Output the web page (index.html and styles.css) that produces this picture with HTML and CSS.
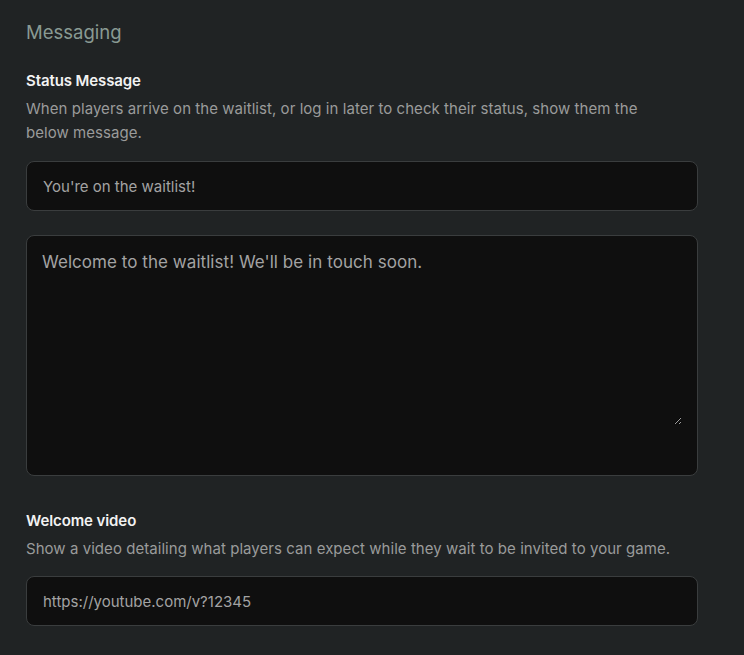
FILE: index.html
```html
<!DOCTYPE html>
<html>
<head>
<meta charset="utf-8">
<link rel="stylesheet" href="styles.css">
</head>
<body>
<main class="panel">
  <h2 class="section-title">Messaging</h2>
  <div class="field">
    <label class="label">Status Message</label>
    <p class="help">When players arrive on the waitlist, or log in later to check their status, show them the below message.</p>
    <input class="input" type="text" value="You're on the waitlist!">
    <div class="textarea-box">
      <textarea class="textarea">Welcome to the waitlist! We'll be in touch soon.</textarea>
    </div>
  </div>
  <div class="field">
    <label class="label">Welcome video</label>
    <p class="help">Show a video detailing what players can expect while they wait to be invited to your game.</p>
    <input class="input" type="text" value="https://youtube.com/v?12345">
  </div>
</main>
</body>
</html>
```
FILE: styles.css
```css
html, body {
  margin: 0;
  padding: 0;
  background: #202324;
}
body {
  font-family: Inter, "Noto Sans", sans-serif;
  color: #e6e6e6;
}
.panel {
  padding: 19px 46px 0 26px;
  display: flex;
  flex-direction: column;
}
.section-title {
  margin: 0;
  font-size: 18.5px;
  font-weight: 400;
  color: #899a93;
  line-height: 26px;
}
.field {
  display: flex;
  flex-direction: column;
}
.field + .field {
  margin-top: 35px;
}
.section-title + .field {
  margin-top: 26px;
}
.label {
  font-size: 15px;
  font-weight: 600;
  color: #f2f2f2;
  line-height: 20px;
  letter-spacing: -0.1px;
}
.help {
  margin: 6px 0 0;
  max-width: 652px;
  font-size: 15px;
  line-height: 24px;
  color: #9a9b9b;
  letter-spacing: 0.05px;
}
.input, .textarea-box {
  box-sizing: border-box;
  width: 100%;
  background: #0f0f0f;
  border: 1px solid #3a3d3e;
  border-radius: 8px;
}
.input {
  height: 50px;
  margin-top: 16px;
  padding: 0 16px;
  font-family: inherit;
  font-size: 15px;
  color: #a3a3a3;
  outline: none;
}
.field:last-child .input {
  margin-top: 15px;
}
.textarea-box {
  height: 241px;
  margin-top: 24px;
  padding: 14px 15px 0 15px;
  display: flex;
  flex-direction: column;
}
.textarea {
  box-sizing: border-box;
  height: 175px;
  width: 100%;
  padding: 0;
  border: none;
  background: transparent;
  color: #a3a3a3;
  font-family: inherit;
  font-size: 17px;
  line-height: 24px;
  letter-spacing: 0.05px;
  outline: none;
  resize: vertical;
}
```
